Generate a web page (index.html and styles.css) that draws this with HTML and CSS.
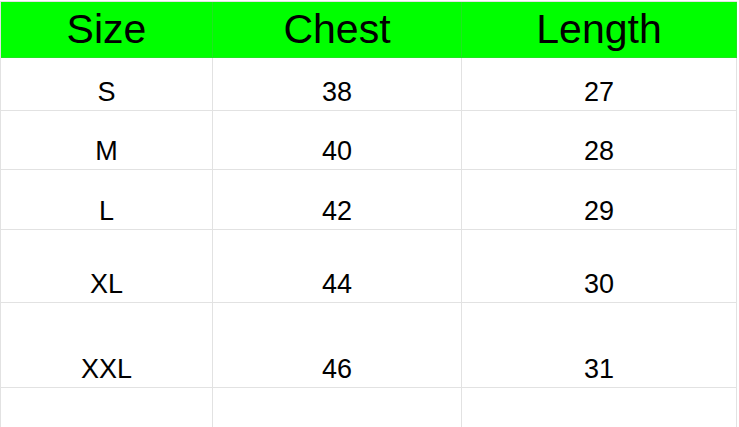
FILE: index.html
```html
<!DOCTYPE html>
<html>
<head>
<meta charset="utf-8">
<link rel="stylesheet" href="styles.css">
</head>
<body>
<div class="sheet">
  <div class="cell head">Size</div>
  <div class="cell head">Chest</div>
  <div class="cell head">Length</div>

  <div class="cell">S</div>
  <div class="cell">38</div>
  <div class="cell">27</div>

  <div class="cell">M</div>
  <div class="cell">40</div>
  <div class="cell">28</div>

  <div class="cell">L</div>
  <div class="cell">42</div>
  <div class="cell">29</div>

  <div class="cell">XL</div>
  <div class="cell">44</div>
  <div class="cell">30</div>

  <div class="cell">XXL</div>
  <div class="cell">46</div>
  <div class="cell">31</div>

  <div class="cell"></div>
  <div class="cell"></div>
  <div class="cell"></div>
</div>
</body>
</html>
```

FILE: styles.css
```css
html, body {
  margin: 0;
  padding: 0;
  background: #ffffff;
  overflow: hidden;
}

body {
  padding-top: 1px;
  font-family: "Liberation Sans", Arial, sans-serif;
  color: #000000;
}

.sheet {
  display: grid;
  grid-template-columns: 212px 249px 275px;
  grid-template-rows: 56px 53px 59px 60px 73px 85px 60px;
  width: 737px;
  border-left: 1px solid #e2e2e2;
  border-top: 1px solid #e2e2e2;
  box-sizing: border-box;
}

.cell {
  border-right: 1px solid #e2e2e2;
  border-bottom: 1px solid #e2e2e2;
  display: flex;
  align-items: flex-end;
  justify-content: center;
  font-size: 27px;
  line-height: 1;
  padding-bottom: 4px;
  box-sizing: border-box;
}

.head {
  background: #00ff00;
  font-size: 41px;
  padding-bottom: 7px;
  border-right-color: #1fe61f;
  border-bottom-color: #1fe61f;
}
```
